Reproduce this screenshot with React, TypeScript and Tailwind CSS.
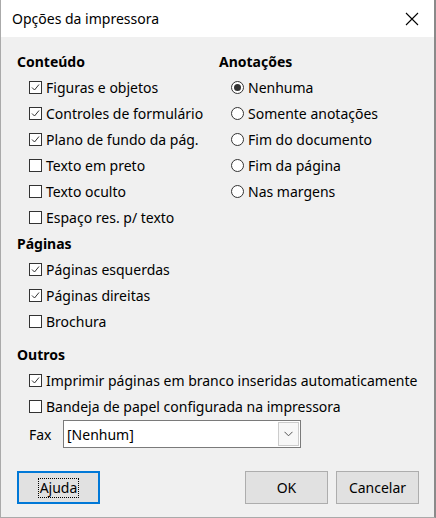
import React from "react";

const font = { fontFamily: '"Noto Sans", "Open Sans", sans-serif' };

function Check({ checked }: { checked?: boolean }) {
  return (
    <span className="w-[13px] h-[13px] border border-[#333333] bg-white flex items-center justify-center shrink-0">
      {checked && (
        <svg width="11" height="11" viewBox="0 0 11 11">
          <path d="M2 5.5 L4.5 8 L9 2.5" fill="none" stroke="#333" strokeWidth="1" />
        </svg>
      )}
    </span>
  );
}

function Radio({ checked }: { checked?: boolean }) {
  return (
    <span className="w-[13px] h-[13px] rounded-full border border-[#333333] bg-white flex items-center justify-center shrink-0">
      {checked && <span className="w-[7px] h-[7px] rounded-full bg-[#333333]" />}
    </span>
  );
}

function CRow({ label, checked }: { label: string; checked?: boolean }) {
  return (
    <div className="h-[26px] flex items-center pl-[12px] gap-[4px]">
      <Check checked={checked} />
      <span>{label}</span>
    </div>
  );
}

function RRow({ label, checked }: { label: string; checked?: boolean }) {
  return (
    <div className="h-[26px] flex items-center pl-[12px] gap-[4px]">
      <Radio checked={checked} />
      <span>{label}</span>
    </div>
  );
}

function Header({ children }: { children: React.ReactNode }) {
  return <div className="h-[26px] flex items-center font-bold">{children}</div>;
}

export default function App() {
  return (
    <div
      className="w-[436px] h-[518px] bg-[#f0f0f0] text-black text-[14px] flex flex-col border-l border-r-2 border-b border-l-[#aaaaaa] border-r-[#8a8a8a] border-b-[#aaaaaa] overflow-hidden"
      style={font}
    >
      <div className="h-[37px] bg-white flex items-center justify-between pl-[11px] pr-[15px] shrink-0">
        <span className="text-[14px]">Opções da impressora</span>
        <svg width="14" height="14" viewBox="0 0 14 14">
          <path d="M1 1 L13 13 M13 1 L1 13" stroke="#000" strokeWidth="1.1" />
        </svg>
      </div>
      <div className="pl-[16px] pt-[11px] flex flex-col">
        <div className="flex">
          <div className="w-[202px] flex flex-col">
            <Header>Conteúdo</Header>
            <CRow label="Figuras e objetos" checked />
            <CRow label="Controles de formulário" checked />
            <CRow label="Plano de fundo da pág." checked />
            <CRow label="Texto em preto" />
            <CRow label="Texto oculto" />
            <CRow label="Espaço res. p/ texto" />
          </div>
          <div className="flex flex-col">
            <Header>Anotações</Header>
            <RRow label="Nenhuma" checked />
            <RRow label="Somente anotações" />
            <RRow label="Fim do documento" />
            <RRow label="Fim da página" />
            <RRow label="Nas margens" />
          </div>
        </div>
        <Header>Páginas</Header>
        <CRow label="Páginas esquerdas" checked />
        <CRow label="Páginas direitas" checked />
        <CRow label="Brochura" />
        <div className="mt-[7px]">
          <Header>Outros</Header>
        </div>
        <CRow label="Imprimir páginas em branco inseridas automaticamente" checked />
        <CRow label="Bandeja de papel configurada na impressora" />
        <div className="h-[28px] flex items-center pl-[12px] mt-[1px]">
          <span className="w-[34px]">Fax</span>
          <div className="w-[238px] h-[28px] bg-white border border-[#7a7a7a] flex items-center justify-between pl-[3px] pr-[1px]">
            <span>[Nenhum]</span>
            <span className="w-[21px] h-[24px] border border-[#cccccc] bg-[#f7f7f7] flex items-center justify-center">
              <svg width="9" height="6" viewBox="0 0 9 6">
                <path d="M0.5 0.8 L4.5 4.8 L8.5 0.8" fill="none" stroke="#555" strokeWidth="1" />
              </svg>
            </span>
          </div>
        </div>
        <div className="flex items-center mt-[23px] pr-[15px]">
          <button className="w-[83px] h-[33px] border-2 border-[#0078d7] bg-[#e1e1e1] flex items-center justify-center">
            <span className="border border-dotted border-black px-[1px] leading-[18px]">Ajuda</span>
          </button>
          <div className="flex-1" />
          <button className="w-[83px] h-[33px] border border-[#adadad] bg-[#e1e1e1] flex items-center justify-center">
            OK
          </button>
          <button className="w-[83px] h-[33px] border border-[#adadad] bg-[#e1e1e1] flex items-center justify-center ml-[8px]">
            Cancelar
          </button>
        </div>
      </div>
    </div>
  );
}
